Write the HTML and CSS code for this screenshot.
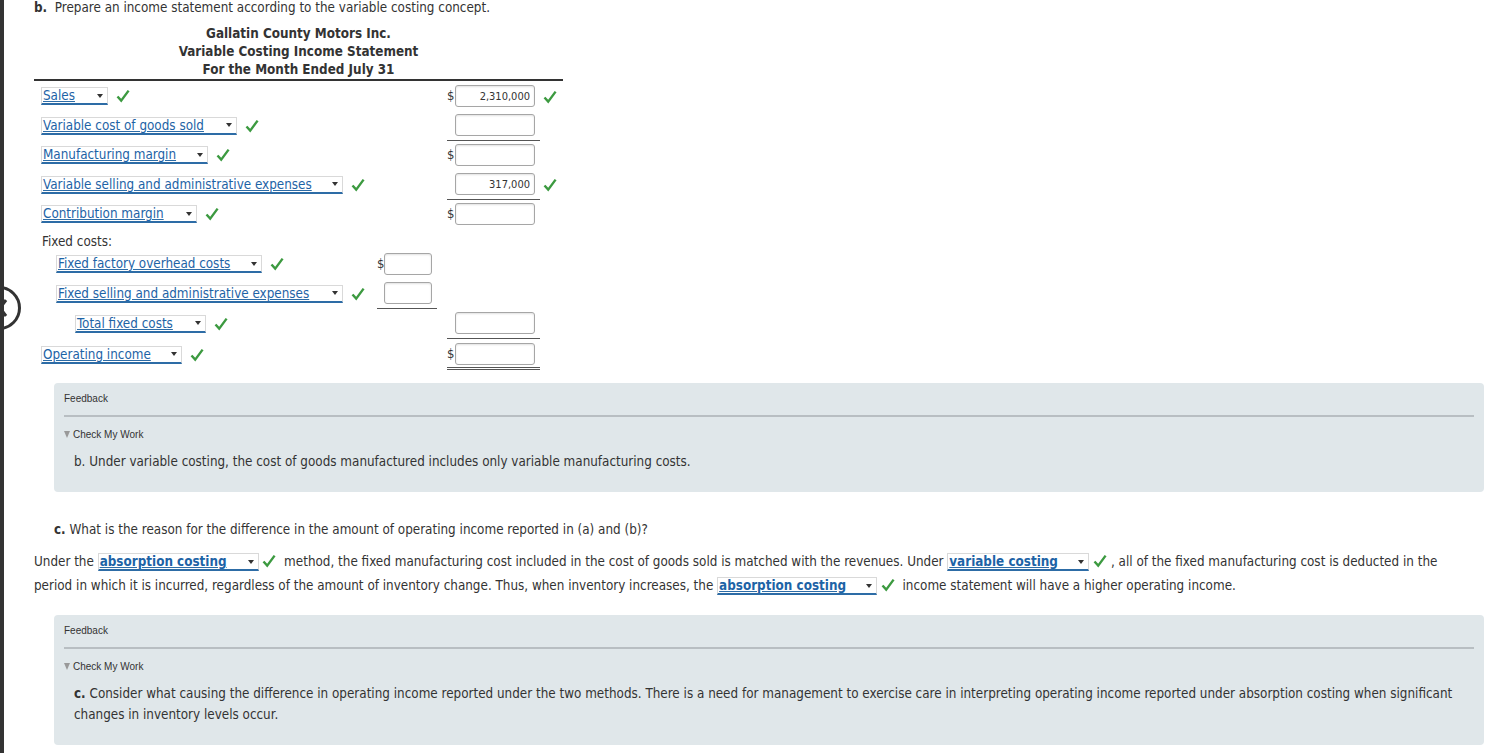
FILE: index.html
```html
<!DOCTYPE html>
<html>
<head>
<meta charset="utf-8">
<title>Variable Costing Income Statement</title>
<link rel="stylesheet" href="styles.css">
</head>
<body>
<div class="page">
  <div class="nav-circle">
    <svg viewBox="0 0 38 38" width="38" height="38"><path d="M26 11 L20 19 L26 27" fill="none" stroke="#333" stroke-width="3"/></svg>
  </div>

  <p class="q"><b>b.</b>&nbsp; Prepare an income statement according to the variable costing concept.</p>

  <div class="stmt">
    <div class="stmt-head">
      <div>Gallatin County Motors Inc.</div>
      <div>Variable Costing Income Statement</div>
      <div>For the Month Ended July 31</div>
    </div>
    <div class="rows">
      <div class="row">
        <div class="lbl"><span class="sel w-sales"><span class="sel-txt">Sales</span><span class="arr"></span></span><svg class="chk" viewBox="0 0 14 14"><path d="M1.5 7.5 L5.2 11.6 L12.6 1.6"/></svg></div>
        <div class="cell inner"></div>
        <div class="cell outer"><span class="cur">$</span><span class="inp">2,310,000</span></div>
        <div class="ok"><svg class="chk" viewBox="0 0 14 14"><path d="M1.5 7.5 L5.2 11.6 L12.6 1.6"/></svg></div>
      </div>
      <div class="row">
        <div class="lbl"><span class="sel w-vcogs"><span class="sel-txt">Variable cost of goods sold</span><span class="arr"></span></span><svg class="chk" viewBox="0 0 14 14"><path d="M1.5 7.5 L5.2 11.6 L12.6 1.6"/></svg></div>
        <div class="cell inner"></div>
        <div class="cell outer ul"><span class="cur"></span><span class="inp"></span></div>
        <div class="ok"></div>
      </div>
      <div class="row">
        <div class="lbl"><span class="sel w-mm"><span class="sel-txt">Manufacturing margin</span><span class="arr"></span></span><svg class="chk" viewBox="0 0 14 14"><path d="M1.5 7.5 L5.2 11.6 L12.6 1.6"/></svg></div>
        <div class="cell inner"></div>
        <div class="cell outer"><span class="cur">$</span><span class="inp"></span></div>
        <div class="ok"></div>
      </div>
      <div class="row">
        <div class="lbl"><span class="sel w-vsa"><span class="sel-txt">Variable selling and administrative expenses</span><span class="arr"></span></span><svg class="chk" viewBox="0 0 14 14"><path d="M1.5 7.5 L5.2 11.6 L12.6 1.6"/></svg></div>
        <div class="cell inner"></div>
        <div class="cell outer ul"><span class="cur"></span><span class="inp">317,000</span></div>
        <div class="ok"><svg class="chk" viewBox="0 0 14 14"><path d="M1.5 7.5 L5.2 11.6 L12.6 1.6"/></svg></div>
      </div>
      <div class="row">
        <div class="lbl"><span class="sel w-cm"><span class="sel-txt">Contribution margin</span><span class="arr"></span></span><svg class="chk" viewBox="0 0 14 14"><path d="M1.5 7.5 L5.2 11.6 L12.6 1.6"/></svg></div>
        <div class="cell inner"></div>
        <div class="cell outer"><span class="cur">$</span><span class="inp"></span></div>
        <div class="ok"></div>
      </div>
      <div class="row-text">Fixed costs:</div>
      <div class="row">
        <div class="lbl ind1"><span class="sel w-ffoh"><span class="sel-txt">Fixed factory overhead costs</span><span class="arr"></span></span><svg class="chk" viewBox="0 0 14 14"><path d="M1.5 7.5 L5.2 11.6 L12.6 1.6"/></svg></div>
        <div class="cell inner"><span class="cur">$</span><span class="inp sm"></span></div>
        <div class="cell outer"></div>
        <div class="ok"></div>
      </div>
      <div class="row">
        <div class="lbl ind1"><span class="sel w-fsa"><span class="sel-txt">Fixed selling and administrative expenses</span><span class="arr"></span></span><svg class="chk" viewBox="0 0 14 14"><path d="M1.5 7.5 L5.2 11.6 L12.6 1.6"/></svg></div>
        <div class="cell inner ul"><span class="cur"></span><span class="inp sm"></span></div>
        <div class="cell outer"></div>
        <div class="ok"></div>
      </div>
      <div class="row">
        <div class="lbl ind2"><span class="sel w-tfc"><span class="sel-txt">Total fixed costs</span><span class="arr"></span></span><svg class="chk" viewBox="0 0 14 14"><path d="M1.5 7.5 L5.2 11.6 L12.6 1.6"/></svg></div>
        <div class="cell inner"></div>
        <div class="cell outer ul"><span class="cur"></span><span class="inp"></span></div>
        <div class="ok"></div>
      </div>
      <div class="row row-last">
        <div class="lbl"><span class="sel w-oi"><span class="sel-txt">Operating income</span><span class="arr"></span></span><svg class="chk" viewBox="0 0 14 14"><path d="M1.5 7.5 L5.2 11.6 L12.6 1.6"/></svg></div>
        <div class="cell inner"></div>
        <div class="cell outer dul"><span class="cur">$</span><span class="inp"></span></div>
        <div class="ok"></div>
      </div>
    </div>
  </div>

  <div class="fb fb-1">
    <div class="fb-title">Feedback</div>
    <div class="fb-check"><span class="tri"></span>Check My Work</div>
    <p class="fb-text">b. Under variable costing, the cost of goods manufactured includes only variable manufacturing costs.</p>
  </div>

  <p class="q q-c"><b>c.</b> What is the reason for the difference in the amount of operating income reported in (a) and (b)?</p>

  <p class="para">Under the <span class="sel b w-abs1"><span class="sel-txt">absorption costing</span><span class="arr"></span></span> <svg class="chk" viewBox="0 0 14 14"><path d="M1.5 7.5 L5.2 11.6 L12.6 1.6"/></svg>&nbsp; method, the fixed manufacturing cost included in the cost of goods sold is matched with the revenues. Under <span class="sel b w-var"><span class="sel-txt">variable costing</span><span class="arr"></span></span> <svg class="chk" viewBox="0 0 14 14"><path d="M1.5 7.5 L5.2 11.6 L12.6 1.6"/></svg> , all of the fixed manufacturing cost is deducted in the period in which it is incurred, regardless of the amount of inventory change. Thus, when inventory increases, the <span class="sel b w-abs2"><span class="sel-txt">absorption costing</span><span class="arr"></span></span> <svg class="chk" viewBox="0 0 14 14"><path d="M1.5 7.5 L5.2 11.6 L12.6 1.6"/></svg>&nbsp; income statement will have a higher operating income.</p>

  <div class="fb fb-2">
    <div class="fb-title">Feedback</div>
    <div class="fb-check"><span class="tri"></span>Check My Work</div>
    <p class="fb-text"><b>c.</b> Consider what causing the difference in operating income reported under the two methods. There is a need for management to exercise care in interpreting operating income reported under absorption costing when significant changes in inventory levels occur.</p>
  </div>
</div>
</body>
</html>
```

FILE: styles.css
```css
* { box-sizing: border-box; }
html, body { margin: 0; padding: 0; }
body {
  background: #fff;
  color: #333;
  font-family: "DejaVu Sans Condensed", "DejaVu Sans", sans-serif;
  font-size: 13.35px;
}
.page {
  position: relative;
  min-height: 753px;
  border-left: 4px solid #333;
  padding: 0 3px 0 30px;
  overflow: hidden;
}
.nav-circle {
  position: absolute;
  left: -27px;
  top: 286px;
  width: 44px;
  height: 44px;
  border: 3px solid #333;
  border-radius: 50%;
  background: #fff;
}
.nav-circle svg { display: block; }

.q { margin: 0; line-height: 16px; }
.q b { font-weight: bold; }

.stmt { width: 529px; margin-top: 9px; }
.stmt-head {
  text-align: center;
  font-weight: bold;
  line-height: 18px;
  border-bottom: 2px solid #333;
}
.rows { padding: 1px 0 0 7px; }
.row {
  display: grid;
  grid-template-columns: 336px 70px 94px 22px;
  align-items: center;
}
.lbl { display: flex; align-items: center; padding: 3px 0 4px; }
.ind1 { padding-left: 15px; }
.ind2 { padding-left: 34px; }
.row-text { height: 21px; padding: 5px 0 0 1px; line-height: 16px; }

.cell { display: flex; align-items: center; padding: 3px 0 4px; min-height: 29px; }
.inner { margin-right: 10px; }
.outer { margin-right: 1px; }
.ul { border-bottom: 1px solid #555; }
.dul { border-bottom: 3px double #555; padding-bottom: 2px; }
.row-last .cell { padding-top: 4px; }
.row-last .lbl { padding-top: 4px; }

.cur { display: inline-block; width: 8px; font-size: 13px; line-height: 16px; }
.inner .cur { width: 7px; }
.inp {
  display: flex;
  justify-content: flex-end;
  align-items: center;
  width: 80px;
  height: 22px;
  border: 1px solid #a6a6a6;
  border-radius: 3px;
  background: #fff;
  box-shadow: inset 0 1px 2px rgba(0,0,0,0.12);
  padding-right: 4px;
  font-size: 11px;
  color: #333;
}
.inp.sm { width: 48px; }
.ok { display: flex; align-items: center; padding-left: 2px; }

.chk {
  width: 14px;
  height: 14px;
  flex: none;
}
.chk path {
  fill: none;
  stroke: #3c9a40;
  stroke-width: 2.4;
}
.lbl .chk { margin-left: 8px; }

.sel {
  display: inline-flex;
  align-items: center;
  height: 18px;
  padding: 0 2px 0 1px;
  background: #fff;
  border: 1px solid #d9d9d9;
  border-bottom: 2px solid #2d6ca6;
  color: #1d63a6;
  line-height: 15px;
  white-space: nowrap;
}
.sel-txt { text-decoration: underline; text-decoration-color: #2d6ca6; }
.sel.b { font-weight: bold; }
.arr {
  margin-left: auto;
  margin-right: 2px;
  width: 0;
  height: 0;
  border-left: 3.5px solid transparent;
  border-right: 3.5px solid transparent;
  border-top: 4px solid #333;
}
.w-sales { width: 67px; }
.w-vcogs { width: 196px; }
.w-mm { width: 167px; }
.w-vsa { width: 302px; }
.w-cm { width: 156px; }
.w-ffoh { width: 206px; }
.w-fsa { width: 287px; }
.w-tfc { width: 131px; }
.w-oi { width: 141px; }
.w-abs1 { width: 161px; }
.w-var { width: 142px; }
.w-abs2 { width: 160px; }

.fb {
  margin: 13px 0 0 20px;
  background: #e0e7ea;
  border-radius: 4px;
  padding: 10px 10px 20px;
}
.fb-title {
  font-family: "Liberation Sans", Arial, sans-serif;
  font-size: 10px;
  line-height: 12px;
  padding-bottom: 10px;
  border-bottom: 2px solid #b8bec2;
}
.fb-check {
  display: flex;
  align-items: center;
  margin-top: 12px;
  font-family: "Liberation Sans", Arial, sans-serif;
  font-size: 10px;
  line-height: 12px;
}
.tri {
  width: 0;
  height: 0;
  margin: -2px 3px 0 0;
  border-left: 3px solid transparent;
  border-right: 3px solid transparent;
  border-top: 7px solid #999;
}
.fb-text { margin: 10px 0 0; padding-left: 10px; line-height: 21px; }

.q-c { margin-top: 30px; padding-left: 20px; }
.para { margin: 12px 14px 0 0; line-height: 24px; }
.para .chk { vertical-align: -2px; }
.fb-2 { margin-top: 17px; }
```
